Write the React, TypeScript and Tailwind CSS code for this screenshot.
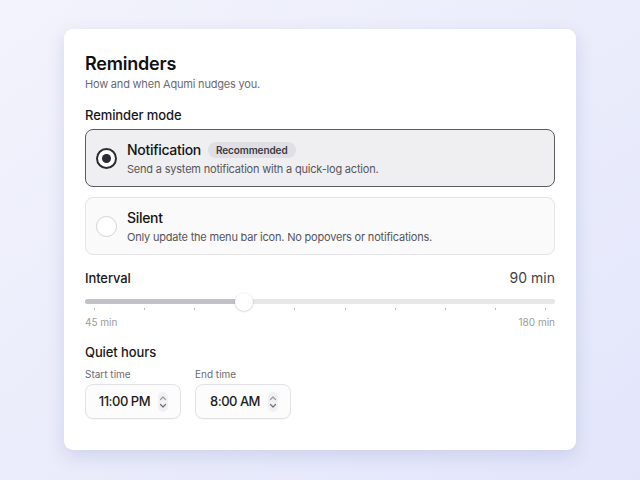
import React from 'react'

const ticks = Array.from({ length: 10 }, (_, i) => i)

function Radio({ checked }: { checked: boolean }) {
  return checked ? (
    <span className="flex h-[21px] w-[21px] flex-shrink-0 items-center justify-center rounded-full border-2 border-[#2a2a30] bg-white">
      <span className="h-[9px] w-[9px] rounded-full bg-[#2a2a38]" />
    </span>
  ) : (
    <span className="h-[21px] w-[21px] flex-shrink-0 rounded-full border border-[#d4d4d8] bg-white" />
  )
}

function Stepper() {
  return (
    <svg width="10" height="20" viewBox="0 0 10 20" fill="none">
      <rect x="0" y="0" width="10" height="20" rx="5" fill="#f1f1f3" />
      <path d="M2.5 7.5L5 5L7.5 7.5" stroke="#9a9aa2" strokeWidth="1.2" strokeLinecap="round" strokeLinejoin="round" />
      <path d="M2.5 12.5L5 15L7.5 12.5" stroke="#6e6e76" strokeWidth="1.2" strokeLinecap="round" strokeLinejoin="round" />
    </svg>
  )
}

function TimeField({ label, value }: { label: string; value: string }) {
  return (
    <div className="flex flex-col">
      <span className="mb-[3px] text-[10px] leading-[14px] text-[#6b6b72]">{label}</span>
      <div className="flex h-[35px] w-[96px] items-center justify-end gap-[8px] rounded-[8px] border border-[#e2e2e6] bg-[#fcfcfd] pr-[12px] shadow-[0_1px_1px_rgba(0,0,0,0.03)]">
        <span className="text-[13px] font-medium tracking-[-0.5px] text-[#1c1c20]">{value}</span>
        <Stepper />
      </div>
    </div>
  )
}

export default function App() {
  return (
    <div
      className="flex h-[480px] w-[640px] justify-center bg-gradient-to-br from-[#f2f3fb] to-[#e3e6fb] pt-[29px]"
      style={{ fontFamily: 'Inter, "Noto Sans", sans-serif' }}
    >
      <div className="h-[421px] w-[512px] rounded-[9px] bg-white px-[21px] pt-[23px] shadow-[0_6px_18px_rgba(70,80,140,0.16)]">
        <h1 className="text-[18px] font-semibold leading-[24px] tracking-[-0.2px] text-[#111114]">Reminders</h1>
        <p className="mt-[1px] text-[11px] leading-[14px] tracking-[-0.2px] text-[#6b6b72]">How and when Aqumi nudges you.</p>

        <h2 className="mt-[16px] text-[13px] font-medium leading-[16px] tracking-[-0.1px] text-[#18181b]">Reminder mode</h2>

        <div className="mt-[6px] flex flex-col gap-[10px]">
          <div className="flex h-[58px] items-center gap-[10px] rounded-[8px] border border-[#5a5a62] bg-[#efeff1] px-[10px]">
            <Radio checked />
            <div className="flex flex-col gap-[3px]">
              <div className="flex items-center gap-[7px]">
                <span className="text-[14px] font-medium leading-[18px] tracking-[-0.3px] text-[#141418]">Notification</span>
                <span className="rounded-full bg-[#dfdfe4] px-[8px] py-[1px] text-[10px] font-semibold leading-[14px] tracking-[-0.1px] text-[#3a3a42]">
                  Recommended
                </span>
              </div>
              <span className="text-[11px] leading-[14px] tracking-[-0.2px] text-[#55555c]">Send a system notification with a quick-log action.</span>
            </div>
          </div>

          <div className="flex h-[58px] items-center gap-[10px] rounded-[8px] border border-[#e4e4e7] bg-[#fafafa] px-[10px]">
            <Radio checked={false} />
            <div className="flex flex-col gap-[3px]">
              <span className="text-[14px] font-medium leading-[18px] tracking-[-0.3px] text-[#141418]">Silent</span>
              <span className="text-[11px] leading-[14px] tracking-[-0.2px] text-[#55555c]">Only update the menu bar icon. No popovers or notifications.</span>
            </div>
          </div>
        </div>

        <div className="mt-[14px] flex items-center justify-between">
          <span className="text-[13px] font-medium leading-[18px] tracking-[-0.1px] text-[#18181b]">Interval</span>
          <span className="text-[14px] leading-[18px] text-[#3f3f46]">90 min</span>
        </div>

        <div className="relative mt-[6px] h-[15px]">
          <div className="absolute left-0 right-0 top-[6px] flex h-[5px] overflow-hidden rounded-full bg-[#e6e6e8]">
            <div className="h-full w-[159px] bg-[#c2c2c6]" />
          </div>
          <div className="absolute left-[150px] top-0 h-[18px] w-[18px] rounded-full bg-white shadow-[0_0.5px_2px_rgba(0,0,0,0.25)]" />
        </div>
        <div className="flex justify-between px-[9px]">
          {ticks.map(i => (
            <span key={i} className={`h-[2px] w-[1px] ${i === 3 ? 'bg-transparent' : 'bg-[#b8b8bc]'}`} />
          ))}
        </div>
        <div className="mt-[5px] flex justify-between text-[10px] leading-[14px] text-[#9a9aa0]">
          <span>45 min</span>
          <span>180 min</span>
        </div>

        <h2 className="mt-[15px] text-[13px] font-medium leading-[16px] tracking-[-0.1px] text-[#18181b]">Quiet hours</h2>
        <div className="mt-[7px] flex gap-[14px]">
          <TimeField label="Start time" value="11:00 PM" />
          <TimeField label="End time" value="8:00 AM" />
        </div>
      </div>
    </div>
  )
}
